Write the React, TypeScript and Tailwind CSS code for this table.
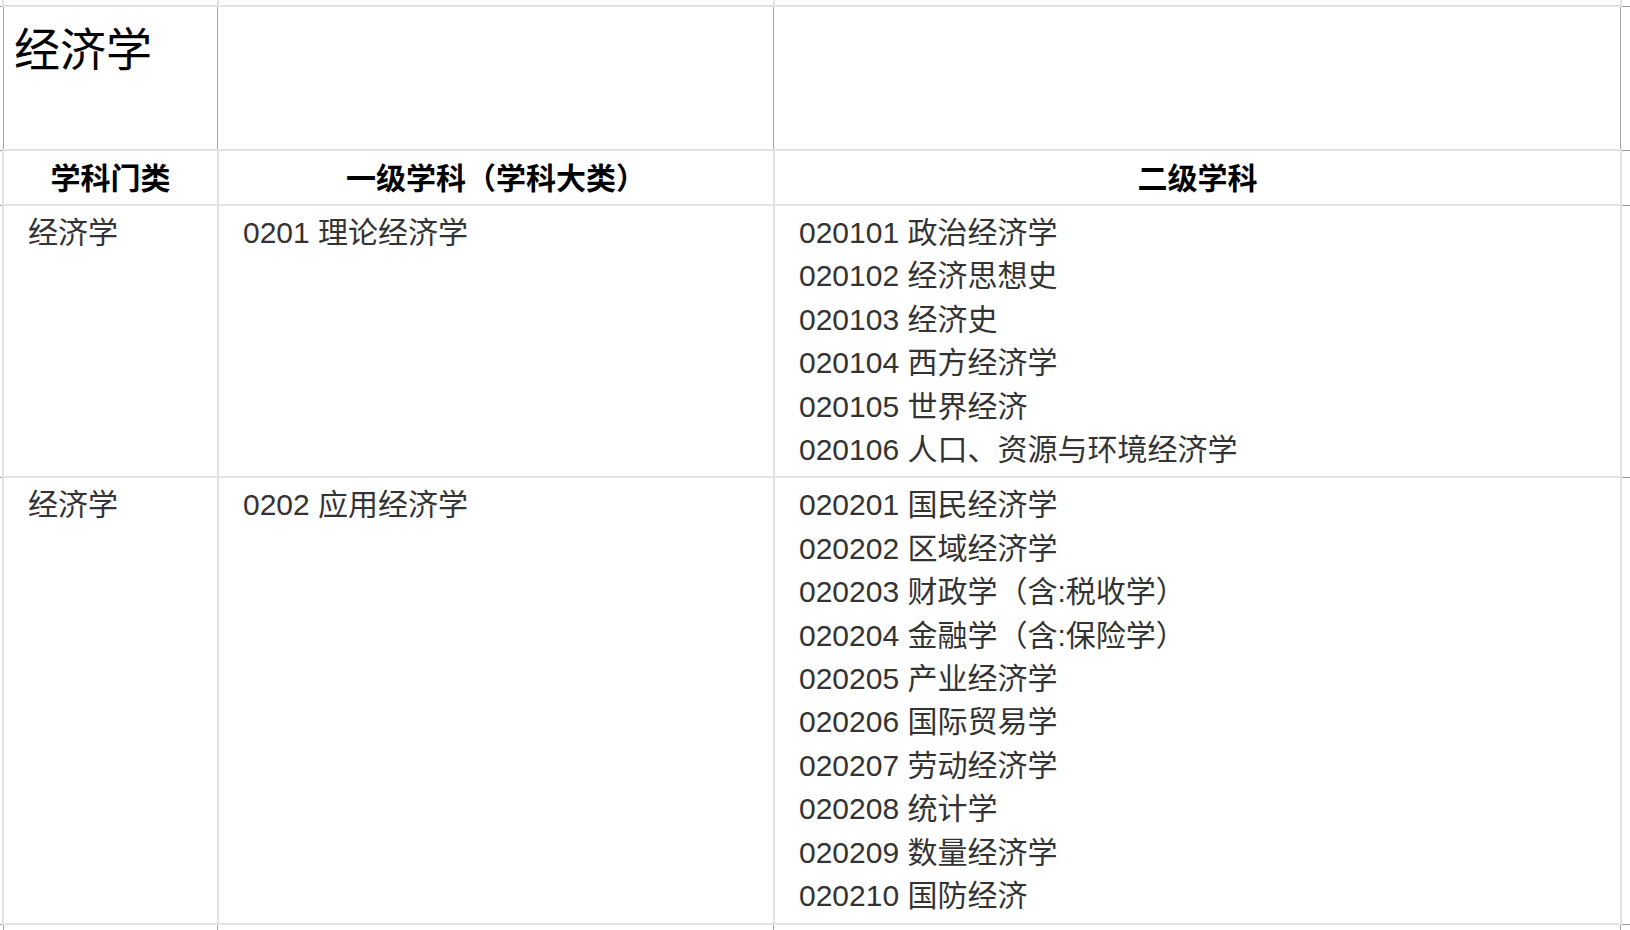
import React from "react";

const FONT = { fontFamily: '"Liberation Sans", "Noto Sans CJK SC", sans-serif' };

const rows = [
  {
    cat: "经济学",
    first: "0201 理论经济学",
    second: [
      "020101 政治经济学",
      "020102 经济思想史",
      "020103 经济史",
      "020104 西方经济学",
      "020105 世界经济",
      "020106 人口、资源与环境经济学",
    ],
  },
  {
    cat: "经济学",
    first: "0202 应用经济学",
    second: [
      "020201 国民经济学",
      "020202 区域经济学",
      "020203 财政学（含:税收学）",
      "020204 金融学（含:保险学）",
      "020205 产业经济学",
      "020206 国际贸易学",
      "020207 劳动经济学",
      "020208 统计学",
      "020209 数量经济学",
      "020210 国防经济",
    ],
  },
];

const GRID = "grid grid-cols-[2px_217px_556px_847px_8px]";

export default function App() {
  return (
    <div className="w-[1630px] h-[930px] overflow-hidden bg-white" style={FONT}>
      {/* partial row above */}
      <div className={`${GRID} h-[7px]`}>
        <div className="border-b border-b-[#9b9b9b]" />
        <div className="border-l-2 border-r-2 border-b-2 border-[#e3e3e3]" />
        <div className="border-r-2 border-b-2 border-[#e3e3e3]" />
        <div className="border-r-2 border-b-2 border-[#e3e3e3]" />
        <div className="border-b border-b-[#9b9b9b]" />
      </div>

      {/* title row */}
      <div className={`${GRID} h-[144px]`}>
        <div className="border-b border-b-[#9b9b9b]" />
        <div className="border-b-2 border-b-[#e3e3e3]">
          <div className="h-full ml-[1px] mr-[1px] border-l border-r border-[#a3a3a3] pl-[10px] pt-[16px]">
            <div className="text-[46px] leading-[55px] text-black">经济学</div>
          </div>
        </div>
        <div className="border-b-2 border-b-[#e3e3e3]">
          <div className="h-full mr-[1px] border-r border-[#a3a3a3]" />
        </div>
        <div className="border-b-2 border-b-[#e3e3e3]">
          <div className="h-full mr-[1px] border-r border-[#a3a3a3]" />
        </div>
        <div className="border-b border-b-[#9b9b9b]" />
      </div>

      {/* header row */}
      <div className={`${GRID} h-[55px]`}>
        <div className="border-b border-b-[#9b9b9b]" />
        <div className="border-l-2 border-r-2 border-b-2 border-[#e3e3e3] flex items-center justify-center pt-[2px] text-[30px] font-bold text-black">
          学科门类
        </div>
        <div className="border-r-2 border-b-2 border-[#e3e3e3] flex items-center justify-center pt-[2px] text-[30px] font-bold text-black">
          一级学科（学科大类）
        </div>
        <div className="border-r-2 border-b-2 border-[#e3e3e3] flex items-center justify-center pt-[2px] text-[30px] font-bold text-black">
          二级学科
        </div>
        <div className="border-b border-b-[#9b9b9b]" />
      </div>

      {/* body rows */}
      {rows.map((r, i) => (
        <div key={i} className={GRID}>
          <div className="border-b border-b-[#9b9b9b]" />
          <div className="border-l-2 border-r-2 border-b-2 border-[#e3e3e3] pl-6 pt-[5px] pb-[5px] text-[30px] leading-[43.4px] text-[#333333]">
            {r.cat}
          </div>
          <div className="border-r-2 border-b-2 border-[#e3e3e3] pl-6 pt-[5px] pb-[5px] text-[30px] leading-[43.4px] text-[#333333]">
            {r.first}
          </div>
          <div className="border-r-2 border-b-2 border-[#e3e3e3] pl-6 pt-[5px] pb-[5px] text-[30px] leading-[43.4px] text-[#333333] flex flex-col">
            {r.second.map((s) => (
              <div key={s}>{s}</div>
            ))}
          </div>
          <div className="border-b border-b-[#9b9b9b]" />
        </div>
      ))}

      {/* partial row below */}
      <div className={`${GRID} h-[10px]`}>
        <div />
        <div>
          <div className="h-full ml-[1px] mr-[1px] border-l border-r border-[#a3a3a3]" />
        </div>
        <div>
          <div className="h-full mr-[1px] border-r border-[#a3a3a3]" />
        </div>
        <div>
          <div className="h-full mr-[1px] border-r border-[#a3a3a3]" />
        </div>
        <div />
      </div>
    </div>
  );
}
